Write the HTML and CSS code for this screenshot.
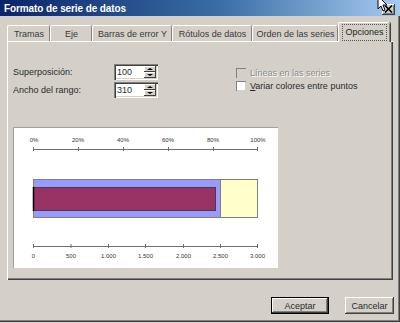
FILE: index.html
```html
<!DOCTYPE html>
<html lang="es">
<head>
  <meta charset="UTF-8" />
  <title>Formato de serie de datos</title>
  <link rel="stylesheet" href="styles.css">
</head>
<body>

  <div class="window">
    <div class="titlebar">
      <span class="title">Formato de serie de datos</span>
      <span class="close-btn">
        <svg width="9" height="8" viewBox="0 0 9 8"><path d="M1 0.5 L8 7.5 M8 0.5 L1 7.5" stroke="#000" stroke-width="1.6"/></svg>
      </span>
    </div>

    <div class="tabs">
      <div class="tab w-tramas">Tramas</div>
      <div class="tab w-eje">Eje</div>
      <div class="tab w-barras">Barras de error Y</div>
      <div class="tab w-rotulos">Rótulos de datos</div>
      <div class="tab w-orden">Orden de las series</div>
      <div class="tab active"><span class="focus">Opciones</span></div>
    </div>

    <div class="panel">
      <div class="fields">
        <div class="spins">
          <div class="field">
            <span class="label">Superposición:</span>
            <div class="spin">
              <span class="spin-value">100</span>
              <span class="spin-btns">
                <span class="spin-btn"><span class="arrow-up"></span></span>
                <span class="spin-btn"><span class="arrow-down"></span></span>
              </span>
            </div>
          </div>
          <div class="field">
            <span class="label">Ancho del rango:</span>
            <div class="spin">
              <span class="spin-value">310</span>
              <span class="spin-btns">
                <span class="spin-btn"><span class="arrow-up"></span></span>
                <span class="spin-btn"><span class="arrow-down"></span></span>
              </span>
            </div>
          </div>
        </div>

        <div class="checks">
          <div class="check disabled"><span class="box"></span><span>Líneas en las series</span></div>
          <div class="check"><span class="box"></span><span><u>V</u>ariar colores entre puntos</span></div>
        </div>
      </div>

      <div class="chart">
        <svg width="265" height="141" viewBox="0 0 265 141">
          <g class="axis">
            <line x1="20" y1="22.5" x2="245" y2="22.5"/>
            <line x1="20.5" y1="20" x2="20.5" y2="24"/>
            <line x1="65.5" y1="20" x2="65.5" y2="24"/>
            <line x1="110.5" y1="20" x2="110.5" y2="24"/>
            <line x1="155.5" y1="20" x2="155.5" y2="24"/>
            <line x1="200.5" y1="20" x2="200.5" y2="24"/>
            <line x1="244.5" y1="20" x2="244.5" y2="24"/>
          </g>
          <g class="tick-label">
            <text x="21" y="15">0%</text>
            <text x="65" y="15">20%</text>
            <text x="110" y="15">40%</text>
            <text x="155" y="15">60%</text>
            <text x="200" y="15">80%</text>
            <text x="245" y="15">100%</text>
          </g>

          <rect x="20.5" y="52.5" width="187" height="38" fill="#9999ff" stroke="#808080"/>
          <rect x="207.5" y="52.5" width="37" height="38" fill="#ffffcc" stroke="#808080"/>
          <rect x="20.5" y="60.5" width="182" height="23" fill="#993366" stroke="#404040"/>
          <line x1="20.5" y1="60" x2="20.5" y2="84" stroke="#000" stroke-width="1.5"/>

          <g class="axis">
            <line x1="20" y1="119.5" x2="245" y2="119.5"/>
            <line x1="20.5" y1="117" x2="20.5" y2="121"/>
            <line x1="58" y1="117" x2="58" y2="121"/>
            <line x1="95.5" y1="117" x2="95.5" y2="121"/>
            <line x1="132.5" y1="117" x2="132.5" y2="121"/>
            <line x1="170.5" y1="117" x2="170.5" y2="121"/>
            <line x1="207.5" y1="117" x2="207.5" y2="121"/>
            <line x1="244.5" y1="117" x2="244.5" y2="121"/>
          </g>
          <g class="tick-label">
            <text x="20.5" y="131">0</text>
            <text x="58" y="131">500</text>
            <text x="95.5" y="131">1.000</text>
            <text x="132.5" y="131">1.500</text>
            <text x="170.5" y="131">2.000</text>
            <text x="207.5" y="131">2.500</text>
            <text x="244.5" y="131">3.000</text>
          </g>
        </svg>
      </div>
    </div>

    <div class="buttons">
      <button class="btn default">Aceptar</button>
      <button class="btn cancel">Cancelar</button>
    </div>

    <svg class="cursor" width="12" height="12" viewBox="0 0 12 12">
      <path d="M1 -4 L1 9 L4 6 L6 11 L8 10 L6 5 L10 5 Z" fill="#fff" stroke="#000" stroke-width="1"/>
    </svg>
  </div>

</body>
</html>
```

FILE: styles.css
```css
* {
  box-sizing: border-box;
  margin: 0;
  padding: 0;
}

body {
  font-family: "Liberation Sans", Arial, sans-serif;
  font-size: 9px;
  color: #2a2a2a;
  background: #d4d0c8;
}

.window {
  position: relative;
  width: 400px;
  height: 322px;
  background: #d4d0c8;
  box-shadow: inset -1px -1px #404040, inset -2px -2px #808080;
  overflow: hidden;
}

.titlebar {
  display: flex;
  align-items: center;
  justify-content: space-between;
  height: 16px;
  padding: 0 5px 0 4px;
  background: linear-gradient(to right, #0a246a, #3a6ea5 55%, #a6caf0);
}

.title {
  color: #fff;
  font-weight: bold;
  font-size: 10px;
  letter-spacing: -0.1px;
}

.close-btn {
  display: flex;
  align-items: center;
  justify-content: center;
  width: 13px;
  height: 11px;
  margin-top: 2px;
  background: #d4d0c8;
  box-shadow: inset -1px -1px #404040, inset 1px 1px #fff, inset -2px -2px #808080;
}

/* tabs */
.tabs {
  display: flex;
  align-items: flex-end;
  height: 19px;
  margin-top: 6px;
  padding-left: 7px;
  position: relative;
  z-index: 2;
}

.tab {
  height: 16px;
  display: flex;
  align-items: center;
  justify-content: center;
  color: #3a3a3a;
  border-top: 1px solid #fff;
  border-left: 1px solid #fff;
  border-radius: 2px 2px 0 0;
  box-shadow: inset -1px 0 #808080, 1px 0 #404040;
}

.w-tramas { width: 43px; }
.w-eje { width: 42px; }
.w-barras { width: 80px; }
.w-rotulos { width: 80px; }
.w-orden { width: 86px; }

.tab.active {
  width: 52px;
  height: 20px;
  margin-bottom: -1px;
  padding-bottom: 1px;
  background: #d4d0c8;
  color: #222;
}

.focus {
  display: block;
  padding: 2px 2px 3px;
  border: 1px dotted #555;
}

/* panel */
.panel {
  width: 386px;
  height: 239px;
  margin-left: 7px;
  padding: 22px 0 0 5px;
  border-top: 1px solid #fff;
  border-left: 1px solid #fff;
  box-shadow: inset -1px -1px #404040, inset -2px -2px #808080;
  position: relative;
  z-index: 1;
}

.fields {
  display: flex;
}

.spins {
  display: flex;
  flex-direction: column;
  gap: 2px;
}

.field {
  display: flex;
  align-items: center;
  height: 16px;
}

.label {
  width: 101px;
}

.spin {
  display: flex;
  align-items: center;
  justify-content: space-between;
  width: 44px;
  height: 16px;
  padding: 0 2px 0 3px;
  background: #fff;
  box-shadow: inset 1px 1px #808080, inset 2px 2px #404040, inset -1px -1px #fff, inset -2px -2px #d4d0c8;
}

.spin-btns {
  display: flex;
  flex-direction: column;
  width: 12px;
  height: 12px;
}

.spin-btn {
  flex: 1;
  display: flex;
  align-items: center;
  justify-content: center;
  background: #d4d0c8;
  box-shadow: inset -1px -1px #404040, inset 1px 1px #fff;
}

.arrow-up {
  border-left: 3px solid transparent;
  border-right: 3px solid transparent;
  border-bottom: 2px solid #000;
}

.arrow-down {
  border-left: 3px solid transparent;
  border-right: 3px solid transparent;
  border-top: 2px solid #000;
}

.checks {
  display: flex;
  flex-direction: column;
  margin-left: 78px;
  margin-top: 2px;
}

.check {
  display: flex;
  align-items: center;
  height: 13px;
  gap: 4px;
}

.check.disabled {
  color: #8c8c8c;
  text-shadow: 1px 1px #fff;
}

.box {
  width: 10px;
  height: 10px;
  background: #fff;
  box-shadow: inset 1px 1px #808080, inset -1px -1px #d4d0c8;
}

.check.disabled .box {
  background: #d4d0c8;
}

/* chart */
.chart {
  width: 265px;
  height: 141px;
  margin-top: 29px;
  background: #fff;
  border-top: 1px solid #a0a0a0;
  border-left: 1px solid #a0a0a0;
}

.chart svg {
  display: block;
  margin: -1px 0 0 -1px;
}

.axis line {
  stroke: #6e6e6e;
  stroke-width: 1;
}

.tick-label text {
  font-family: "Liberation Sans", Arial, sans-serif;
  font-size: 6px;
  fill: #333;
  text-anchor: middle;
}

/* buttons */
.buttons {
  display: flex;
  justify-content: flex-end;
  gap: 16px;
  margin-top: 17px;
  padding-right: 6px;
}

.btn {
  height: 17px;
  font-family: "Liberation Sans", Arial, sans-serif;
  font-size: 9px;
  color: #2a2a2a;
  background: #d4d0c8;
  border: none;
  box-shadow: inset -1px -1px #404040, inset 1px 1px #fff, inset -2px -2px #808080;
}

.btn.default {
  width: 58px;
  box-shadow: inset 0 0 0 1px #000, inset -2px -2px #404040, inset 2px 2px #fff, inset -3px -3px #808080;
}

.btn.cancel {
  width: 49px;
}

.cursor {
  position: absolute;
  top: 0;
  left: 377px;
}
```
